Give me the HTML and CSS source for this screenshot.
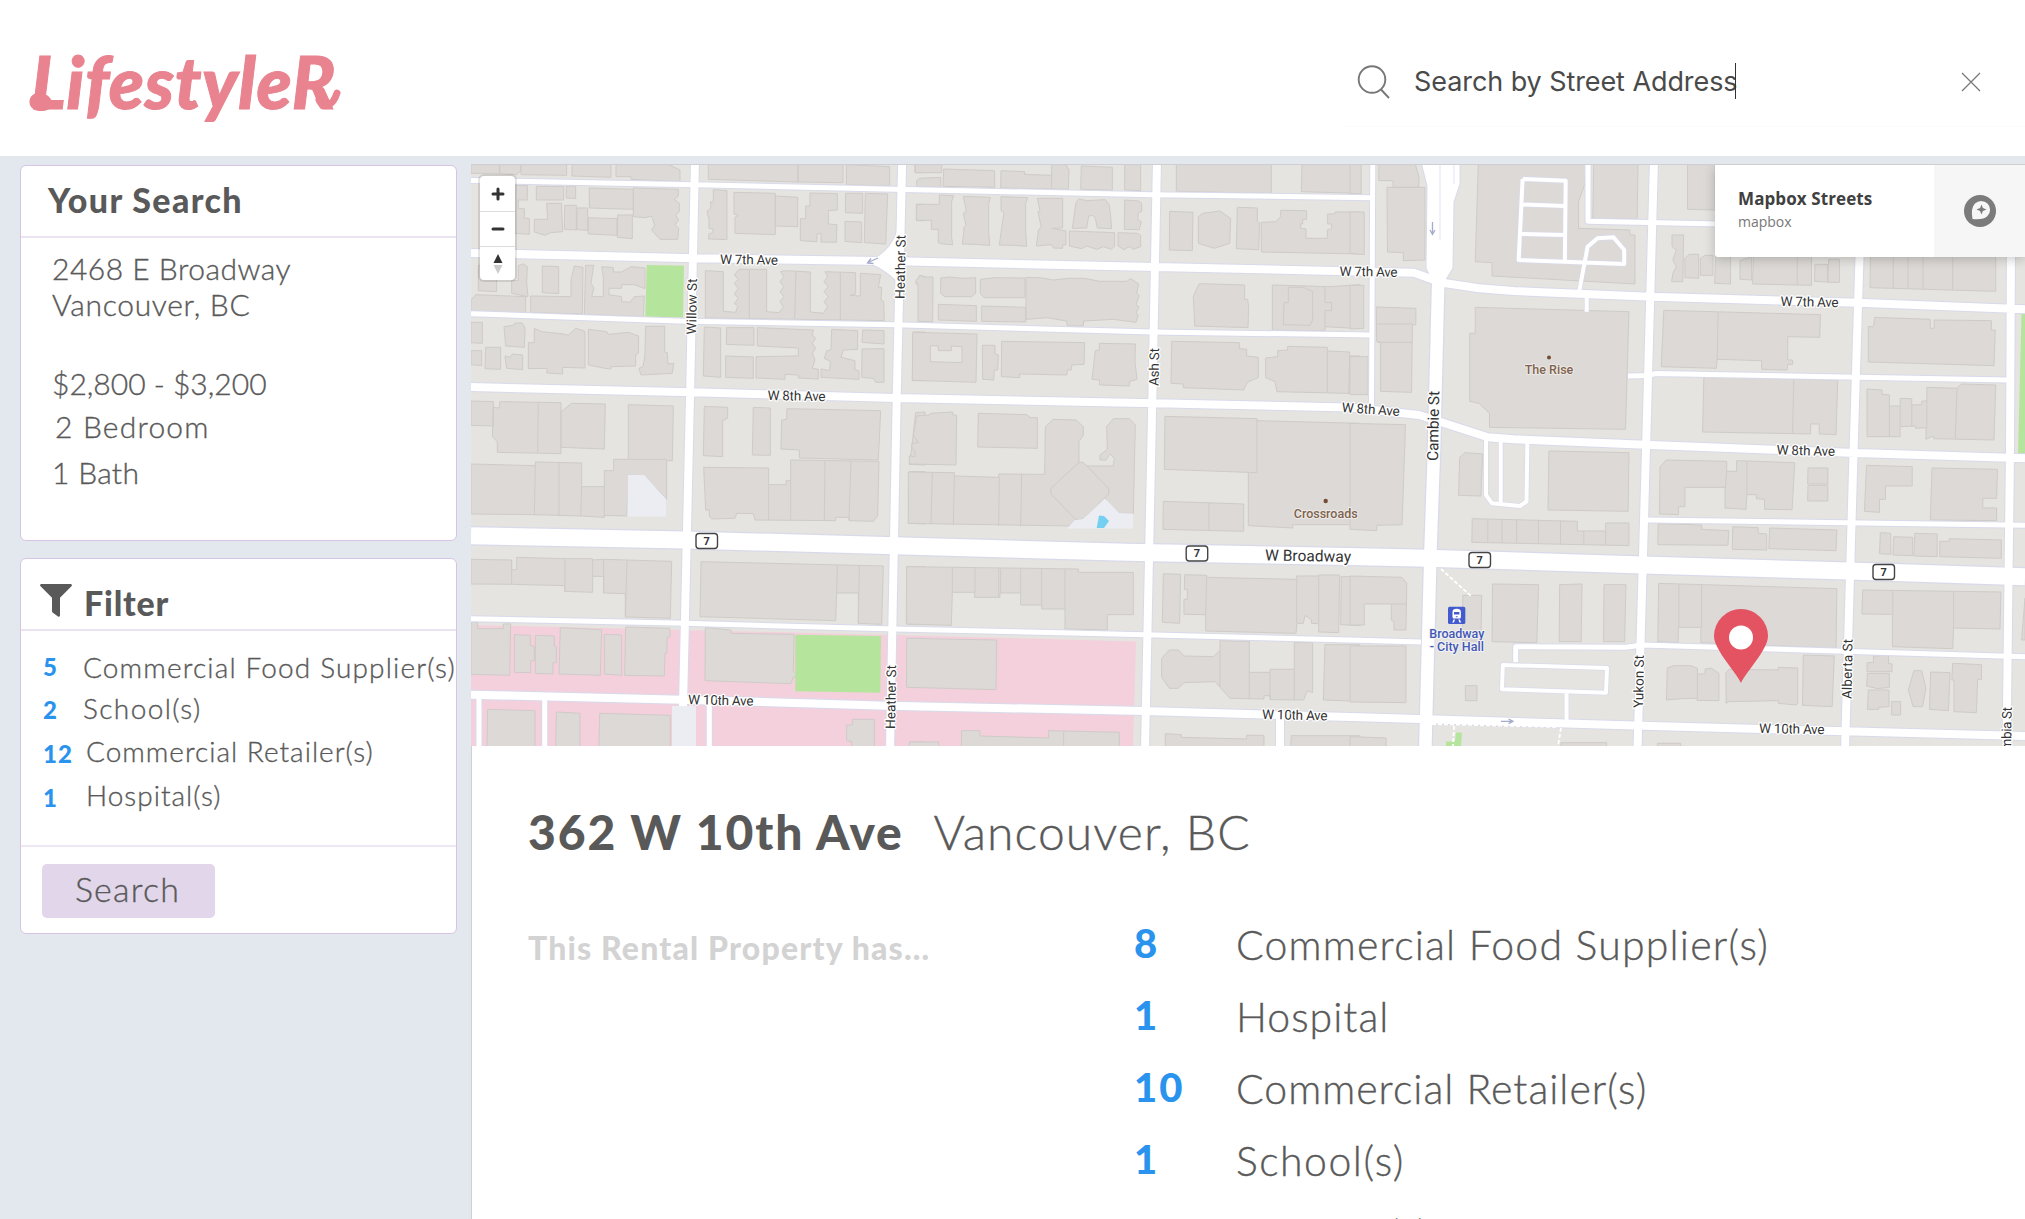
FILE: index.html
```html
<!DOCTYPE html>
<html lang="en">
<head>
<meta charset="utf-8">
<title>LifestyleR</title>
<link rel="stylesheet" href="styles.css">
</head>
<body>
<header class="topbar">
  <div class="logo">LifestyleR
    <svg class="swash" width="320" height="60" viewBox="0 0 320 60"><path d="M22 38C13 44 3 42 4 35C5 28 17 29 20 37M290 34C294 44 304 40 308 27"/></svg>
  </div>
  <div class="search">
    <svg class="search-icon" width="36" height="36" viewBox="0 0 36 36"><circle cx="15" cy="15.5" r="13.3"/><path d="M24 25.5L32 34"/></svg>
    <span class="search-text">Search by Street Address</span><span class="caret"></span>
    <svg class="close-icon" width="20" height="20" viewBox="0 0 20 20"><path d="M1 1L19 19M19 1L1 19"/></svg>
  </div>
</header>
<div class="page">
  <aside class="sidebar">
    <section class="card">
      <h2 class="card-title">Your Search</h2>
      <div class="criteria">
        <p class="street">2468 E Broadway</p>
        <p class="city">Vancouver, BC</p>
        <p class="price">$2,800 - $3,200</p>
        <p class="beds">2 Bedroom</p>
        <p class="baths">1 Bath</p>
      </div>
    </section>
    <section class="card">
      <h2 class="card-title filter-title">
        <svg class="funnel" width="32" height="33" viewBox="0 0 32 33"><path d="M1.2 0H30.8Q33 .8 31.2 2.6L20 13.8V31.5Q19.6 33.2 18 32.5L12.600 28.600Q12 28 12 27V13.800L.8 2.600Q-1 .8 1.200 0Z"/></svg>
        <span>Filter</span>
      </h2>
      <ul class="filters">
        <li class="row-food"><b>5</b><span>Commercial Food Supplier(s)</span></li>
        <li class="row-school"><b>2</b><span>School(s)</span></li>
        <li class="row-retail"><b>12</b><span>Commercial Retailer(s)</span></li>
        <li class="row-hospital"><b>1</b><span>Hospital(s)</span></li>
      </ul>
      <div class="card-foot"><button class="btn">Search</button></div>
    </section>
  </aside>
  <main class="main">
    <div class="map">
      <svg class="map-canvas" viewBox="471 164 1554 582" width="1554" height="582">
        <rect class="land" x="471" y="164" width="1554" height="582"/>
        <path class="medical" d="M471 625L895 635L1136 641.500L1133 746H471Z"/>
        <!-- north-west blocks -->
        <g class="bld" transform="translate(465 150) scale(.33333)">
          <path d="M18 44H104V70H18ZM168 44H305V76L168 74ZM321 44H438V82L321 78ZM453 44H612L645 60V95L498 88V80H453ZM104 44H168V62L155 74L104 70ZM730 44H999V96L730 88ZM999 44H1134V98L999 96ZM1144 44L1274 50V108L1144 105ZM1350 44H1380V68H1350ZM1354 163H1380V212H1354Z"/>
          <path d="M150 106H187V150H160V176H178V205H193V253L150 250ZM214 109H296V150H214ZM304 108H332V146L304 144ZM245 160H290V178L293 245L258 248L240 256L208 246V208H248ZM299 166H334V240L298 238ZM336 174H368V241L336 239ZM373 114L505 118V178L373 174ZM370 203L456 206V256L370 252ZM458 195H502V266L457 262ZM505 114L640 118V138L628 148L643 160V185L632 196L641 210L630 224L641 235L638 268H585L560 240L569 226L560 198L540 203L505 200Z"/>
          <path d="M745 119L786 122V269L730 267L732 252L744 248V236H732V208L726 184L738 174L736 156H745ZM807 127L931 130V254L810 250V202L820 196L807 192ZM931 138L998 142V230L931 228ZM1035 129L1117 131V180L1090 182V222L1116 224L1114 277L1068 276V250L1056 252V275L1006 272V206H1022V168H1035ZM1142 130H1193V190L1141 188ZM1140 214L1190 216V278L1140 274ZM1201 130L1268 132L1262 282L1198 278Z"/>
          <path d="M40 346H95V425L40 422ZM160 346L175 342L187 350L185 400L189 440L140 430V392H160ZM232 348L281 350V431L232 428ZM18 450L32 434L182 440V488L18 484ZM197 438L318 440V390L328 348L354 352L352 492L197 488ZM362 346H386L384 360L378 400L387 414L380 440H415V380L410 350L445 353V366H470L498 350L540 354V416L508 404H470V415H432V434L470 440V455L495 457L508 440L538 438L535 500L358 494Z"/>
          <path d="M721 362L775 365V484L812 487L818 470L808 460L820 445L808 432L820 415L808 400L820 388L808 375L822 358H905V485L942 488L955 470L945 455L957 440L945 425L957 410L945 395L957 380L947 365L962 362L1036 366V486L1075 490L1088 470L1077 455L1090 440L1077 425L1090 410L1077 395L1088 380L1080 365L1172 368V432L1155 436L1186 438V370L1247 374L1240 412H1250L1248 450L1256 455L1258 512L721 504ZM853 360V505M993 364L989 507M1126 368V510M1380 380L1364 376L1352 400L1362 410V512H1380Z"/>
          <path d="M18 517H52V580L18 578ZM18 602H50V647L18 644ZM62 592H107V658L60 656ZM117 530L145 526L150 519H172L180 535L178 592L122 588ZM120 618L135 622L142 612L173 615V659L125 655ZM208 535L230 545L296 552L310 556L332 535L360 544V654L293 652V672L246 669V655L190 656V578H208ZM370 538L425 545L430 553L490 547L521 558L520 610L512 614V648L438 650V657L420 655L370 645ZM542 529H599V606L607 608L609 642L626 640L622 670L528 675L522 655L534 650L540 615Z"/>
          <path d="M718 531L767 534V682L715 678ZM785 533H867V586L784 583ZM877 533L1045 540L1042 555L1052 565L1042 580L1052 595L1042 610L1050 630L1042 655L1060 658V687L1000 684V675L960 673V688L873 684V620L1000 618V594L877 588ZM782 618L865 621V685L782 682ZM1100 538L1178 542V598L1135 600L1128 622L1170 632V660L1182 662V688L1068 682V657L1093 662L1097 635L1078 625L1085 602L1098 600ZM1193 540L1257 542V582L1191 577ZM1191 597L1257 596V697H1232L1225 685L1190 682ZM1345 546H1380V692H1342Z"/>
        </g>
        <g class="bld" transform="translate(465 440) scale(.33333)">
          <path d="M18 -117L85 -115V-42L18 -44ZM85 -98L102 -96L105 -115L288 -112V41L97 37V5L82 -10ZM220 -113L218 39M288 -85L320 -110L421 -108L418 27L288 22ZM490 -106L625 -102L622 62H605V178L537 106L489 104L486 228L418 226V232L347 228L210 224L18 222V72L211 77V66L350 69V140H418V92H446V58H490ZM211 77L208 226M282 68V226M350 140L347 228M418 140V230M490 58H605"/>
          <path d="M718 -101L788 -98V-65L773 -58V50L715 47ZM865 -98L916 -96V46L862 45ZM966 -94L1247 -88L1240 60L1003 54V30L948 27L950 -60L965 -62ZM716 82L911 84V134H963V122H977V60L1242 64L1238 228L1225 244L1152 242V232H1112V242L870 240L865 221L815 220L810 235L740 237L733 228V210H722ZM911 134V240M977 122V240M1080 62L1078 240M1158 63L1152 240M1352 -82L1380 -84V75L1333 73L1340 25ZM1333 95H1380V252L1330 250Z"/>
          <path d="M18 358L140 360V390L155 388V352L300 356H382V360L415 358L620 364L616 535L481 531V461L416 459V409H383V457L299 454V437L142 433L18 432ZM140 360V432M300 356V454M383 360V410M416 360V459M486 362L481 531M708 365L1255 378L1250 553L1180 550V459H1115L1112 542L705 530ZM1117 376L1115 460M1183 378L1180 550M1325 380H1380V554L1324 552Z"/>
          <path d="M18 546H38V566H115V552H137L134 706L18 703ZM148 584L196 586V616L208 620V662H197V698L148 697ZM211 586L268 588V618L274 620V668H264V702L211 700ZM286 563L410 569L406 706L282 702ZM418 583L470 585V706L418 702ZM482 561L615 565V590L607 592L605 640H600L598 708L479 706ZM721 563L798 570V580L987 583L985 695L998 700V712H984L978 731L720 722ZM1327 595H1380V742L1324 738ZM68 808L210 812V925H66ZM274 816L345 820V925H272ZM404 820L616 826V925H402ZM1162 838H1228V925H1160V905L1145 902V855H1162ZM1334 906H1380V925H1334Z"/>
        </g>
        <!-- Heather to Cambie blocks -->
        <g class="bld" transform="translate(900 150) scale(.33333)">
          <path d="M46 44H125V68H46ZM50 110V92L60 85L122 82V112ZM131 57L284 62V112L129 109ZM303 62L374 65V73L455 76V44H498L507 60L505 118L302 114ZM455 70V117M544 48L637 52V121L542 118ZM674 44H722V122L674 120ZM829 44H1114V130L829 124ZM1206 44H1380V130L1204 125Z"/>
          <path d="M50 163H118V135L161 137L155 155V262L158 284L128 282L115 278V238H94V211H50ZM190 139L271 142L266 160V245L269 286L225 283L187 282L192 240L190 234L198 226L190 190L199 184ZM303 140L383 143L377 160V245L380 289L340 286L298 285L304 240L312 188L303 182ZM412 145H488V234L455 235L498 243V285H488V295L460 294L455 284L409 288L416 238L424 232L414 186L420 182ZM536 147L560 152L616 149L628 165L632 200L635 236L592 234L586 205L578 196L566 198L560 234L517 235L528 158ZM508 243L644 248V288L634 298L610 290L590 298L560 288L545 296L508 288ZM674 150L716 153L725 160V184L714 190V210L724 215L718 239L673 238ZM654 248L712 250L722 256V290L700 298L688 290L672 299L654 288Z"/>
          <path d="M809 184L879 187L877 302L808 300ZM908 190L960 183L978 196L992 205L989 280L943 295L895 280V200ZM1012 172L1072 174V215L1079 218L1076 299L1009 296ZM1084 217L1128 215L1142 200V181L1220 182V208H1208V222H1202V235L1218 237V265H1282V240L1295 236V222H1283V192H1305V186H1380V312L1084 306Z"/>
          <path d="M60 376L72 381H99L98 515L54 514V402L47 394ZM122 384L146 381L188 385L227 383V430L215 440H135L122 430ZM241 388L285 383L375 384V443H252L241 430ZM115 463L229 467V514L115 510ZM245 468L377 472V516L245 514ZM378 382L420 383L460 390L505 385H553L600 394L680 394L692 386L716 402L710 430L718 436L708 465L717 470L708 490L715 495L708 517L640 508L551 513L550 528H502L500 513L440 503L378 508ZM898 401L1034 405V448H1043L1046 470L1044 533L884 528L880 440L890 416ZM1117 405L1225 408L1275 410H1292L1380 404V536L1275 530V543L1117 541ZM1165 412H1210L1238 425V510L1230 526L1150 524L1152 458H1165ZM1275 410V458H1295V482H1275V530"/>
          <path fill-rule="evenodd" d="M38 547L231 552L228 697L37 691ZM91 587V635L186 638V590L154 588V602H115V588ZM247 586H285V612L295 615L293 660H283L281 690L248 688ZM305 574L554 578L552 643L515 645V660H502L501 675L359 672V683L304 680ZM598 580L706 582L705 635L711 688L688 695V708L599 705V690L576 688L586 602L598 600ZM815 574L1018 578V596L1040 598V618L1075 622V682L1042 697L1031 720L850 713V702L813 700ZM1097 624L1133 620V602L1163 600V589L1282 592V603L1349 606V618H1380V731L1131 725L1125 695L1097 683ZM1282 603V728M1349 618L1346 730"/>
          <path d="M50 798L88 795L92 790L158 786V794L170 796L168 945L28 942V918L45 920V905L36 895V880L55 878L40 855ZM235 790L380 794L392 803H412V895L233 891ZM436 830L460 808L528 810L550 830V855L537 875V936L455 1020L530 1108L510 1128L25 1120V966L163 968V978L296 982V972L434 973ZM620 830L640 806H688L706 825L700 1090H655L626 1062L560 948L640 948L643 925L630 912L618 930H600V915L622 898ZM97 968L93 1122M163 978L160 1124M298 982L296 1128M365 972L362 1130M795 799L1071 806V968L793 958ZM1071 812L1380 820V1138L1352 1137V1124H1178V1134L1045 1127V968M790 1054L1031 1062V1144L789 1138ZM927 1058V1142"/>
          <path d="M537 937H550L626 1015V1032L550 1108H527L453 1032V1015Z"/>
        </g>
        <g class="bld" transform="translate(900 440) scale(.33333)">
          <path d="M20 380L535 387V397H700V524H622V570L495 567V507H425V495H362V459H300V472H224V457H157L154 556L20 552ZM157 383V458M225 386V458M296 386V472M302 386V458M362 386V458M425 386V495M495 387V507M790 401L842 403L839 550L787 547ZM854 404L920 406V412L1190 418V408H1256V405H1319L1316 578L1256 576V551L1234 550V538L1215 527L1210 550H1191L1188 580L917 573V524L852 523V478H862V448H853ZM920 412L917 524M1190 418V550M1256 405V550M1324 410H1380V557L1322 554ZM20 595L290 600L288 749L20 742ZM785 655L808 630H835L852 648L940 650L960 632V602L1048 604V697H1110V688H1183V608H1238V758L1222 752L1211 780L1110 779V767H1092V777L990 775L945 725L852 728L835 745H808L785 712ZM960 632V740M1048 697V777M1110 697V779M1183 688V780M1275 614H1380V784L1270 780ZM185 872H240V888L446 894V872L658 877V925H184ZM491 873V925M28 906H116V925H28ZM796 881L844 884V892L1040 897V886H1092V925H796ZM1174 887H1380V925H1172Z"/>
        </g>
        <!-- Cambie to Columbia blocks -->
        <g class="bld" transform="translate(1350 150) scale(.43049 .33333)">
          <path d="M0 44H26V132L0 130ZM67 44H152L160 80V112H100V92H67ZM86 112H174V330L124 332V308L87 306ZM0 186H33V314L0 310ZM0 406H32V535L0 537ZM61 471L153 475V524L145 526L143 727L71 724V577L62 574ZM62 522H145M64 577H144M0 620H42V734H0ZM0 820L129 824L121 1124L62 1126V1142L0 1138Z"/>
          <path d="M298 44H548L546 100L531 155V235L650 240V255H662V402L330 378V338L291 335ZM566 44H669L667 208L564 205ZM784 44H848V180L784 178ZM291 472L648 485L640 838L324 832V790L300 760L278 754V550H291ZM748 255H775L773 395H747L750 370L758 350L750 330L758 300L748 290ZM778 325L788 313H810V385L778 383ZM814 325L825 316H843V376H814ZM850 310H884V402L847 400ZM906 332L933 320V390L906 388ZM938 300H1072V406L935 402ZM1039 300V404M1080 343H1109V396L1079 394ZM1112 328H1137V397H1110ZM1209 310H1500V424L1208 413ZM1262 310V415M1296 310V416M1331 310V418M1400 310V421"/>
          <path d="M729 481L1093 494L1091 562L1017 560V630H1028V643H1017L1015 660L956 658V632L853 628L851 655L723 650ZM855 487L853 630M822 680L1133 690L1129 854L1090 852V822H1070V852L819 846ZM1031 686L1028 850M1219 502L1348 508V535H1357V510L1490 512V540H1499L1496 647L1204 636V530H1216ZM1201 717L1236 720V733L1253 735V768H1278V745L1305 746V765L1328 764V754L1340 752V712L1410 715L1420 702L1500 705L1496 870L1356 866L1355 858L1338 868V833L1314 835V828L1278 830V860H1201ZM1253 768V858M1278 768V828M1305 765V830M1340 752V835M1410 715L1406 866M462 903L648 908L646 1084L460 1080ZM255 922L267 908L308 912L304 1038L252 1036ZM735 930L875 934V964H898V932L1033 938L1027 1079L963 1078V1048L944 1046V1034H922L920 1078L871 1074V1012H778V1070H763V1094L719 1092L720 950ZM875 964L872 1014M922 934V1034M1064 954H1110V1002H1063ZM1064 1006H1110V1053H1063ZM1200 946L1306 950V1008H1244V1048H1230V1087L1195 1084ZM1352 954L1504 958L1502 1045H1470V1074H1502V1112L1348 1110Z"/>
        </g>
        <g class="bld" transform="translate(1350 440) scale(.43049 .33333)">
          <path d="M284 236L528 244V273H594V249H648V317L283 307ZM320 237V308M353 238V308M387 239V309M438 240V310M489 242V311M543 273V313M594 273V315M716 251L817 255V268L880 272L878 316L715 314ZM889 260L948 263V280L968 282V330L888 328ZM975 264L1131 270L1129 332L973 326ZM1232 278L1256 280V343L1230 341ZM1263 290L1307 292V347L1261 345ZM1312 280L1364 282V350L1310 348ZM1392 296L1513 300V355L1370 350V304H1392ZM0 408L120 412L132 430L130 570H102V545L96 540V492H33V555H0ZM96 492H132M331 432L438 434L434 608L330 605ZM487 434L539 432L537 605H486ZM590 434H641L638 605H589ZM262 466H306L304 604L261 602ZM717 430L1131 446L1129 625L815 608V562H763L762 608L715 605ZM764 432V562M817 434V562M1191 450L1512 456L1510 567L1402 564L1400 626L1260 620V523L1189 522ZM1261 452V523M1402 454V564"/>
          <path d="M0 618H130V788L0 786ZM268 737H295V782H268ZM737 684L752 677H792L807 685V702H825V687L840 685L857 700V782L806 781V775L770 776L735 780ZM807 702V775M880 688L995 690V682L1040 684V790L1036 795L995 790V782L880 785L874 790L873 700ZM1053 645L1125 648L1120 800L1051 796ZM1216 648L1251 646V670L1259 672V695H1201V668H1216ZM1202 700H1253V742L1225 746L1200 738ZM1204 750H1252V800L1228 802V808H1202ZM1258 785H1279V825H1258ZM1310 692H1328L1338 745L1330 800H1308L1297 750ZM1349 696L1394 698L1390 812L1346 808ZM1400 670L1467 674V718H1458L1455 818L1403 815V720H1398ZM0 890L84 894V925H0ZM490 908H596V925H490ZM714 910H768V925H714ZM1568 474L1560 600H1568Z"/>
        </g>
        <path class="plaza" d="M627.700 474.700H644L666 499V516.500H627.500ZM1105 498.500L1119 513L1133 513.500V528.500H1067L1075 520L1083 519ZM672 706H696V746H672Z"/>
        <path class="pond" d="M1099 515.500L1104 516L1109 521L1104 528H1096.700Z"/>
        <path class="park" d="M646.700 265L684 265.700L683 317.300L645.300 316.700ZM795.300 634.700L881 636L880.300 692.700L795.300 691.300ZM2021.500 313.300H2025V454H2018ZM1456 732.500H1462L1461 746H1446V741.500H1455Z"/>
        <g class="casing">
          <path class="w5" d="M471 180.500L515 181.300L695 184.700L905 189.500L1152 194.700L1371.500 197.700M471 313.700L685 321.300L895 324.700L1152 332L1371.500 335M471 618.700L685 623.300L895 629L1145 634.700L1360 640.300L1421 642M1647 520L1845 522.700L2025 525.300M1628 376L1650 375.500L1655 373.500L2008 380M1588 160V221.300L1720 224M1372.800 160L1371.500 408M479 697V750M544.700 698V750M709.300 702V750M1515.700 662V646.700L1625.500 647.300L1642.700 645L2025 656.700"/>
          <path class="w8" d="M471 253L695 258.300L898 261.300L1155 267L1414 272.700L1441 282.500L1479 288.300L1513.600 291L1651 296.700L1858 302.700L2025 309.300M471 387L692 392.300L895 398L1155 403.300L1350 407.500L1419 415L1440 421.700L1487.800 437.300L1513.600 439.300L1651 445L1849 452.700L2025 458.300M471 694.700L682 699.700L888 705.700L1145 711L1360 717.300L1427.500 719.300L1643 725.700L1845 731.300L2025 736M695 160L690 396.700L683 706M902.200 160L896.700 398L890 750M1157 160L1152.300 400L1145 750M1280 716V750M1654 160L1646 450L1637.500 750M1860 240L1853.600 450L1845 750M2011 240L2010 450L2006.500 750"/>
          <path class="w12" d="M1438.500 270L1434 450L1430.500 550L1425.300 750"/>
          <path class="w17" d="M471 535.700L685 540L895 545.700L1127 552.300L1360 556.700L1427.500 558.300L1643 565L1849 571L2025 576.700"/>
          <path class="lot" d="M1522.600 179L1565.700 180.700L1564.800 262.700M1522.600 179L1518.700 260L1624.200 264V250L1613.500 237.300L1597.500 238.300L1587.600 246.700L1579.500 290M1522 204.500L1565 206M1521.500 234L1565 235M1586.700 298V311.700M1486 438V495L1492 503.300L1520 506L1526.500 501.500L1527.400 440M1500.700 440V503M1502.800 665L1607 668L1606 692.700L1502 689.300ZM1566.500 693V720"/>
          <path class="tri" d="M867 262Q889 254 897 232L905 290Q889 270 867 262Z"/>
          <path class="tri" d="M1421 160L1427.500 186L1426.500 268L1433 282H1444L1452.500 268L1453.500 202L1459.500 184V160Z"/>
        </g>
        <g class="road">
          <path class="w5" d="M471 180.500L515 181.300L695 184.700L905 189.500L1152 194.700L1371.500 197.700M471 313.700L685 321.300L895 324.700L1152 332L1371.500 335M471 618.700L685 623.300L895 629L1145 634.700L1360 640.300L1421 642M1647 520L1845 522.700L2025 525.300M1628 376L1650 375.500L1655 373.500L2008 380M1588 160V221.300L1720 224M1372.800 160L1371.500 408M479 697V750M544.700 698V750M709.300 702V750M1515.700 662V646.700L1625.500 647.300L1642.700 645L2025 656.700"/>
          <path class="w8" d="M471 253L695 258.300L898 261.300L1155 267L1414 272.700L1441 282.500L1479 288.300L1513.600 291L1651 296.700L1858 302.700L2025 309.300M471 387L692 392.300L895 398L1155 403.300L1350 407.500L1419 415L1440 421.700L1487.800 437.300L1513.600 439.300L1651 445L1849 452.700L2025 458.300M471 694.700L682 699.700L888 705.700L1145 711L1360 717.300L1427.500 719.300L1643 725.700L1845 731.300L2025 736M695 160L690 396.700L683 706M902.200 160L896.700 398L890 750M1157 160L1152.300 400L1145 750M1280 716V750M1654 160L1646 450L1637.500 750M1860 240L1853.600 450L1845 750M2011 240L2010 450L2006.500 750"/>
          <path class="w12" d="M1438.500 270L1434 450L1430.500 550L1425.300 750"/>
          <path class="w17" d="M471 535.700L685 540L895 545.700L1127 552.300L1360 556.700L1427.500 558.300L1643 565L1849 571L2025 576.700"/>
          <path class="lot" d="M1522.600 179L1565.700 180.700L1564.800 262.700M1522.600 179L1518.700 260L1624.200 264V250L1613.500 237.300L1597.500 238.300L1587.600 246.700L1579.500 290M1522 204.500L1565 206M1521.500 234L1565 235M1586.700 298V311.700M1486 438V495L1492 503.300L1520 506L1526.500 501.500L1527.400 440M1500.700 440V503M1502.800 665L1607 668L1606 692.700L1502 689.300ZM1566.500 693V720"/>
          <path class="tri" d="M867 262Q889 254 897 232L905 290Q889 270 867 262Z"/>
          <path class="tri" d="M1421 160L1427.500 186L1426.500 268L1433 282H1444L1452.500 268L1453.500 202L1459.500 184V160Z"/>
        </g>
        <path class="median" d="M1440 164V240M1454 164V184"/>
        <path class="path" d="M1441 569L1471 596M1432 724L1556 727M1454 726L1453 746M1561 728L1558 746"/>
        <path class="arrow" d="M1432.500 222V233M1430 230L1432.500 234.500L1435 230M878 258L868 262.500M871 258.500L867.500 263L873.500 263.500M1501 721.300H1512M1508.500 719L1513 721.300L1508.500 723.600"/>
        <g class="street-name">
          <text x="720" y="264" textLength="58" transform="rotate(.8 720 264)">W 7th Ave</text>
          <text x="767.500" y="400" textLength="58" transform="rotate(1 767 400)">W 8th Ave</text>
          <text x="688" y="704.300" textLength="65.500" transform="rotate(1.200 688 704)">W 10th Ave</text>
          <text x="1339.500" y="276" textLength="58" transform="rotate(.8 1339 276)">W 7th Ave</text>
          <text x="1341.500" y="412" textLength="58" transform="rotate(4 1341 412)">W 8th Ave</text>
          <text x="1780.500" y="306" textLength="58" transform="rotate(1 1780 306)">W 7th Ave</text>
          <text x="1776.500" y="454.500" textLength="58.500" transform="rotate(1.500 1776 454)">W 8th Ave</text>
          <text x="1262" y="719" textLength="65.500" transform="rotate(1.200 1262 719)">W 10th Ave</text>
          <text x="1759" y="733" textLength="65.500" transform="rotate(1 1759 733)">W 10th Ave</text>
          <text class="major" x="1265" y="560.500" textLength="86" transform="rotate(1 1265 560)">W Broadway</text>
          <text textLength="56" transform="translate(696 334.500) rotate(-89)">Willow St</text>
          <text textLength="64" transform="translate(904.500 299) rotate(-89)">Heather St</text>
          <text textLength="64" transform="translate(895 729) rotate(-89)">Heather St</text>
          <text textLength="38" transform="translate(1158.500 386) rotate(-89)">Ash St</text>
          <text class="major" textLength="70" transform="translate(1438 461) rotate(-89)">Cambie St</text>
          <text textLength="53" transform="translate(1643 708) rotate(-89)">Yukon St</text>
          <text textLength="60" transform="translate(1851.500 699) rotate(-89)">Alberta St</text>
          <text textLength="69" transform="translate(2010.500 776) rotate(-89)">Columbia St</text>
        </g>
        <g class="poi">
          <circle cx="1549" cy="357.500" r="2"/><text x="1549" y="373.500">The Rise</text>
          <circle cx="1325.700" cy="501" r="2.200"/><text x="1325.700" y="517.500">Crossroads</text>
        </g>
        <g class="transit">
          <rect x="1448" y="606.700" width="17.300" height="17.300" rx="1.500"/>
          <path fill-rule="evenodd" d="M1452.500 612Q1452.500 608.700 1456.700 608.700Q1460.900 608.700 1460.900 612V617Q1460.900 618.500 1459.500 618.500H1453.900Q1452.500 618.500 1452.500 617ZM1454 612V614.500H1459.400V612ZM1453.500 619.500H1455L1454 622.500H1452.300ZM1458.400 619.500H1459.900L1461.100 622.500H1459.400ZM1455.800 616.200V617.300H1457.600V616.200Z"/>
          <text x="1456.800" y="637.500">Broadway</text><text x="1456.800" y="651">- City Hall</text>
        </g>
        <g class="shield">
          <rect x="696" y="533.500" width="21.500" height="15" rx="3"/><text x="706.700" y="544.800">7</text>
          <rect x="1186.200" y="546" width="21.500" height="15" rx="3"/><text x="1197" y="557.300">7</text>
          <rect x="1469" y="552.500" width="21.500" height="15" rx="3"/><text x="1479.700" y="563.800">7</text>
          <rect x="1873" y="564.500" width="21.500" height="15" rx="3"/><text x="1883.700" y="575.800">7</text>
        </g>
        <path class="pin" d="M1741 683C1737 673 1714 650 1714 636A27 27 0 0 1 1768 636C1768 650 1745 673 1741 683Z"/>
        <circle class="pin-eye" cx="1741" cy="637.500" r="12"/>
      </svg>
      <div class="zoom">
        <span><svg width="14" height="14" viewBox="0 0 14 14"><path d="M7 2V12M2 7H12"/></svg></span>
        <span><svg width="14" height="14" viewBox="0 0 14 14"><path d="M2 7H12"/></svg></span>
        <span><svg width="10" height="20" viewBox="0 0 10 20"><path class="north" d="M5 0L9.500 9H.5Z"/><path class="south" d="M5 20L9.500 11H.5Z"/></svg></span>
      </div>
      <div class="style-card">
        <div class="style-info"><strong>Mapbox Streets</strong><small>mapbox</small></div>
        <div class="style-logo">
          <svg width="32" height="32" viewBox="0 0 32 32"><circle cx="16" cy="16" r="16" fill="#7b7b7b"/><path d="M8.500 24Q6.500 13 11 8.500A8.800 8.800 0 0 1 23.500 21Q19.500 25 8.500 24Z" fill="#f6f6f6"/><path d="M17.500 9.500L18.900 13.100L22.500 14.500L18.900 15.900L17.500 19.500L16.100 15.900L12.500 14.500L16.100 13.100Z" fill="#7b7b7b"/></svg>
        </div>
      </div>
    </div>
    <section class="details">
      <h1 class="address">362 W 10th Ave<span>Vancouver, BC</span></h1>
      <div class="facts">
        <h3>This Rental Property has...</h3>
        <dl>
          <dt>8</dt><dd>Commercial Food Supplier(s)</dd>
          <dt>1</dt><dd class="tight">Hospital</dd>
          <dt>10</dt><dd class="tight">Commercial Retailer(s)</dd>
          <dt>1</dt><dd class="loose">School(s)</dd>
          <dt></dt><dd class="last">Daycare(s)</dd>
        </dl>
      </div>
    </section>
  </main>
</div>
</body>
</html>
```
FILE: styles.css
```css
* { box-sizing: border-box; margin: 0; padding: 0; }
body {
  width: 2025px; height: 1219px; overflow: hidden;
  display: flex; flex-direction: column;
  background: #e3e8ef; color: #595959;
  font-family: Lato, "Open Sans", sans-serif; font-weight: 300;
}
svg { display: block; flex: none; }

.topbar { flex: none; height: 156px; background: #fff; display: flex; justify-content: space-between; }
.logo {
  position: relative; padding: 44px 0 0 31px; line-height: 74px;
  font-size: 72px; font-weight: 900; font-style: italic; letter-spacing: .6px; color: #e8838f;
  -webkit-text-stroke: 1px #e8838f;
}
.swash { position: absolute; left: 29px; top: 66px; fill: none; stroke: #e8838f; stroke-width: 7; stroke-linecap: round; }
.search {
  width: 685px; height: 127px; padding: 63px 0 0 16px;
  display: flex; align-items: flex-start; border-bottom: 1px solid #fcfcfc;
}
.search-icon { margin: 1px 0 0 1px; fill: none; stroke: #777; stroke-width: 1.9; }
.search-text { margin: 1px 0 0 21px; font: 400 27px/36px Inter, sans-serif; letter-spacing: -.080px; color: #4a4a4a; }
.caret { width: 1px; height: 36px; background: #333; margin-left: -2px; }
.close-icon { margin: 9px 44px 0 auto; fill: none; stroke: #777; stroke-width: 1.2; }

.page { flex: 1; display: flex; min-height: 0; }
.sidebar { width: 471px; flex: none; padding: 9px 14px 0 20px; display: flex; flex-direction: column; gap: 17px; }
.card { height: 376px; background: #fff; border: 1px solid #d7c3e4; border-radius: 6px; }
.card-title {
  height: 72px; padding: 1px 0 0 27px; border-bottom: 2px solid #ebe3f1;
  font-size: 34px; font-weight: 900; line-height: 66px; letter-spacing: 1.350px;
}
.criteria, .filters span, .facts dd, .address span, .btn { -webkit-text-stroke: .35px #595959; }
.criteria { padding: 12px 0 0 31px; font-size: 30px; line-height: 36px; }
.street { letter-spacing: .5px; }
.city { letter-spacing: .7px; }
.price { margin-top: 43px; letter-spacing: 0; }
.beds { margin-top: 7px; padding-left: 3px; letter-spacing: 1.2px; }
.baths { margin-top: 10px; letter-spacing: .3px; }

.filter-title { display: flex; padding: 21px 0 0 19px; line-height: 46px; letter-spacing: .8px; }
.funnel { margin: 4px 12px 0 0; fill: #595959; }
.filters { list-style: none; height: 216px; padding: 18px 0 0 22px; border-bottom: 2px solid #efe8f4; }
.filters li { display: flex; font-size: 28px; line-height: 36px; letter-spacing: 1.150px; white-space: nowrap; }
.filters b { width: 40px; flex: none; font-size: 24px; font-weight: 900; letter-spacing: 1px; color: #2a93ee; }
.row-food { height: 41px; }
.row-school { height: 43px; }
.filters .row-school { letter-spacing: 1.400px; }
.row-school b { padding-top: 2px; }
.row-retail, .row-hospital { height: 44px; }
.filters .row-retail { letter-spacing: 1px; }
.filters .row-hospital { letter-spacing: 1px; }
.row-retail b, .row-hospital b { width: 43px; padding-top: 3px; }
.card-foot { padding: 17px 0 0 21px; }
.btn {
  width: 173px; height: 54px; border: 0; border-radius: 5px; background: #e2d6ea;
  padding: 0 2px 4px 0; font: 300 34px/50px Lato, sans-serif; letter-spacing: 1.200px; color: #595959;
}

.main { width: 1554px; padding-top: 8px; display: flex; flex-direction: column; }
.map { position: relative; flex: none; height: 582px; border-top: 1px solid #cfcfd1; overflow: hidden; }
.map-canvas { margin-top: -1px; }
.land { fill: #e5e4e0; }
.medical { fill: #f4d0dc; }
.park { fill: #b5e59c; }
.plaza { fill: #ebedf2; }
.pond { fill: #74cff1; }
.bld path { fill: #dcd9d6; stroke: #cfcbc8; stroke-width: 1; vector-effect: non-scaling-stroke; }
.casing, .road { fill: none; stroke-linejoin: round; }
.casing { stroke: #d8daea; }
.road { stroke: #fff; }
.casing .w5 { stroke-width: 7; } .road .w5 { stroke-width: 5; }
.casing .w8 { stroke-width: 10; } .road .w8 { stroke-width: 8; }
.casing .w12 { stroke-width: 15; } .road .w12 { stroke-width: 12.500; }
.casing .w17 { stroke-width: 19.500; } .road .w17 { stroke-width: 17; }
.casing .lot { stroke-width: 5.500; } .road .lot { stroke-width: 4; }
.casing .tri { stroke-width: 2; } .road .tri { fill: #fff; stroke: none; }
.median { fill: none; stroke: #e3e4f0; }
.path { fill: none; stroke: #fff; stroke-width: 1.800; stroke-dasharray: 4 2; }
.arrow { fill: none; stroke: #a5abcb; stroke-width: 1.300; }
.map-canvas text { font-family: Roboto, sans-serif; font-weight: 400; paint-order: stroke; stroke-linejoin: round; }
.street-name text { font-size: 13.500px; fill: #333; stroke: #fff; stroke-width: 2.500px; }
.street-name .major { font-size: 15.500px; }
.poi text { font-size: 12.500px; font-weight: 500; text-anchor: middle; fill: #80634f; stroke: #eeebe8; stroke-width: 2px; }
.poi circle { fill: #744c33; }
.transit rect { fill: #445bd0; }
.transit path { fill: #fff; }
.transit text { font-size: 12.500px; font-weight: 500; text-anchor: middle; fill: #4358b5; stroke: #f3f3f3; stroke-width: 2px; }
.shield rect { fill: #fff; stroke: #444; stroke-width: 1.400; }
.shield text { font-size: 11px; font-weight: 700; text-anchor: middle; fill: #333; }
.pin { fill: #e35362; }
.pin-eye { fill: #fff; }

.zoom {
  position: absolute; left: 9px; top: 11px; width: 35px; height: 104px;
  background: #fff; border-radius: 4px; box-shadow: 0 0 0 2px rgba(0, 0, 0, .1);
  display: grid; grid-template-rows: 35px 35px 34px;
}
.zoom span { display: grid; place-items: center; }
.zoom span + span { border-top: 1px solid #ddd; }
.zoom path { fill: none; stroke: #333; stroke-width: 3; stroke-linecap: round; }
.zoom .north { fill: #333; stroke: none; }
.zoom .south { fill: #ccc; stroke: none; }
.style-card {
  position: absolute; right: 0; top: 0; width: 310px; height: 92px;
  display: flex; background: #fff; border-bottom-left-radius: 3px; box-shadow: 0 2px 12px rgba(0, 0, 0, .22);
}
.style-info { width: 219px; padding: 22px 0 0 23px; font-family: "Open Sans", sans-serif; }
.style-info strong { display: block; font-size: 17px; line-height: 24px; font-weight: 700; letter-spacing: .1px; color: #404040; }
.style-info small { display: block; font-size: 14px; line-height: 22px; font-weight: 400; color: #777; }
.style-logo { flex: 1; display: grid; place-items: center; background: #f6f6f6; }

.details { flex: 1; min-height: 0; background: #fff; border-left: 1px solid #cdd0d8; padding: 56px 0 0 56px; }
.address { font-size: 48px; line-height: 60px; font-weight: 900; letter-spacing: 1.850px; }
.address span { margin-left: 30px; font-weight: 300; letter-spacing: 1.100px; }
.facts { display: grid; grid-template-columns: 606px 1fr; margin-top: 47px; }
.facts h3 { padding-top: 3px; font-size: 32px; line-height: 72px; font-weight: 900; letter-spacing: 1.150px; color: #d3d3d3; }
.facts dl { display: grid; grid-template-columns: 102px 1fr; grid-auto-rows: 72px; line-height: 72px; }
.facts dt { margin-top: -2px; font-size: 40px; font-weight: 900; letter-spacing: 2px; color: #2a93ee; }
.facts dd { font-size: 41px; letter-spacing: 1.200px; }
.facts .tight { letter-spacing: 1px; }
.facts .loose { letter-spacing: 1.500px; }
.facts .last { margin-top: 2px; }
```
